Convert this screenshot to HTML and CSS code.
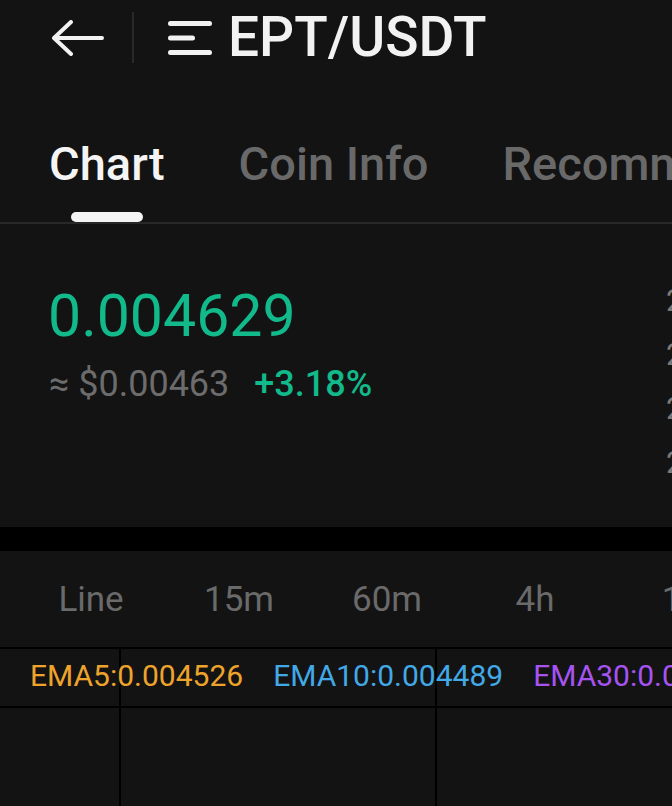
FILE: index.html
```html
<!DOCTYPE html>
<html lang="en">
<head>
<meta charset="utf-8">
<title>EPT/USDT</title>
<link rel="stylesheet" href="styles.css">
</head>
<body>
<div class="page">
  <header class="header">
    <svg class="back" width="52" height="36" viewBox="0 0 52 36">
      <path d="M19 2 L2 18 L19 34 M2 18 H50" fill="none" stroke="#f2f2f2" stroke-width="4" stroke-linecap="round" stroke-linejoin="round"/>
    </svg>
    <span class="vdiv"></span>
    <svg class="menu" width="44" height="36" viewBox="0 0 44 36">
      <path d="M2.5 3.5 H41.5 M2.5 18 H24.5 M2.5 32.5 H41.5" fill="none" stroke="#f2f2f2" stroke-width="5" stroke-linecap="round"/>
    </svg>
    <h1 class="title">EPT/USDT</h1>
  </header>

  <nav class="tabs">
    <div class="tab active">Chart</div>
    <div class="tab">Coin Info</div>
    <div class="tab">Recommended</div>
  </nav>

  <section class="summary">
    <div class="left">
      <div class="price">0.004629</div>
      <div class="sub"><span class="usd">≈ $0.00463</span><span class="chg">+3.18%</span></div>
    </div>
    <div class="right">
      <div class="stat">24h High</div>
      <div class="stat">24h Low</div>
      <div class="stat">24h Vol(EPT)</div>
      <div class="stat">24h Turnover</div>
    </div>
  </section>

  <div class="band"></div>

  <div class="periods">
    <div class="period">Line</div>
    <div class="period">15m</div>
    <div class="period">60m</div>
    <div class="period">4h</div>
    <div class="period">1D</div>
  </div>

  <div class="chart">
    <div class="legend">
      <span class="ema5">EMA5:0.004526</span>
      <span class="ema10">EMA10:0.004489</span>
      <span class="ema30">EMA30:0.004402</span>
    </div>
  </div>
</div>
</body>
</html>
```

FILE: styles.css
```css
html, body {
  margin: 0;
  padding: 0;
  background: #131313;
}
body {
  font-family: Roboto, "Liberation Sans", sans-serif;
  color: #f2f2f2;
  width: 672px;
  height: 806px;
  overflow: hidden;
}
.page {
  width: 672px;
  overflow: hidden;
}

/* header */
.header {
  display: flex;
  align-items: center;
  height: 75px;
  padding-left: 52px;
}
.back { flex: none; }
.vdiv {
  width: 2px;
  height: 51px;
  background: #2a2a2a;
  margin-left: 28px;
  flex: none;
}
.menu {
  flex: none;
  margin-left: 34px;
}
.title {
  margin: 0 0 0 16px;
  font-size: 55px;
  line-height: 55px;
  font-weight: 500;
  color: #f2f2f2;
  white-space: nowrap;
}

/* tabs */
.tabs {
  display: flex;
  gap: 74px;
  padding-left: 49px;
  border-bottom: 2px solid #282828;
  white-space: nowrap;
}
.tab {
  display: flex;
  flex-direction: column;
  align-items: center;
  padding-top: 65px;
  font-size: 47px;
  line-height: 47px;
  font-weight: 500;
  color: #696969;
}
.tab::after {
  content: "";
  display: block;
  width: 72px;
  height: 10px;
  margin-top: 25px;
  border-radius: 5px;
  background: transparent;
}
.tab.active { color: #f4f4f4; }
.tab.active::after { background: #f4f4f4; }

/* summary */
.summary {
  display: grid;
  grid-template-columns: 616px auto;
  height: 253px;
  padding-top: 50px;
  padding-left: 50px;
}
.left {
  padding-top: 12px;
}
.price {
  font-size: 59px;
  line-height: 59px;
  color: #12b98a;
  margin-left: -2px;
}
.sub {
  margin-top: 21px;
  font-size: 36px;
  line-height: 36px;
  white-space: nowrap;
  margin-left: -1px;
}
.usd { color: #6c6c6c; }
.chg {
  color: #12b98a;
  font-weight: 500;
  margin-left: 25px;
}
.right {
  white-space: nowrap;
}
.stat {
  font-size: 31px;
  line-height: 54px;
  color: #7a7a7a;
}

.band {
  height: 24px;
  background: #000;
}

/* periods */
.periods {
  display: grid;
  grid-template-columns: repeat(5, 148px);
  padding-left: 17px;
  height: 96px;
  align-items: center;
}
.period {
  text-align: center;
  font-size: 35px;
  line-height: 35px;
  color: #6a6a6a;
}

/* chart */
.chart {
  height: 160px;
  background-color: #131313;
  background-image:
    linear-gradient(#000, #000),
    linear-gradient(#000, #000),
    linear-gradient(#000, #000),
    linear-gradient(#000, #000);
  background-size: 2px 100%, 2px 100%, 100% 2px, 100% 2px;
  background-position: 119px 0, 435px 0, 0 0, 0 59px;
  background-repeat: no-repeat;
}
.legend {
  display: flex;
  gap: 30px;
  align-items: center;
  height: 53px;
  padding-top: 2px;
  padding-left: 30px;
  font-size: 30px;
  line-height: 30px;
  white-space: nowrap;
}
.ema5 { color: #eea42c; }
.ema10 { color: #42a8e6; }
.ema30 { color: #a653f2; }
```
